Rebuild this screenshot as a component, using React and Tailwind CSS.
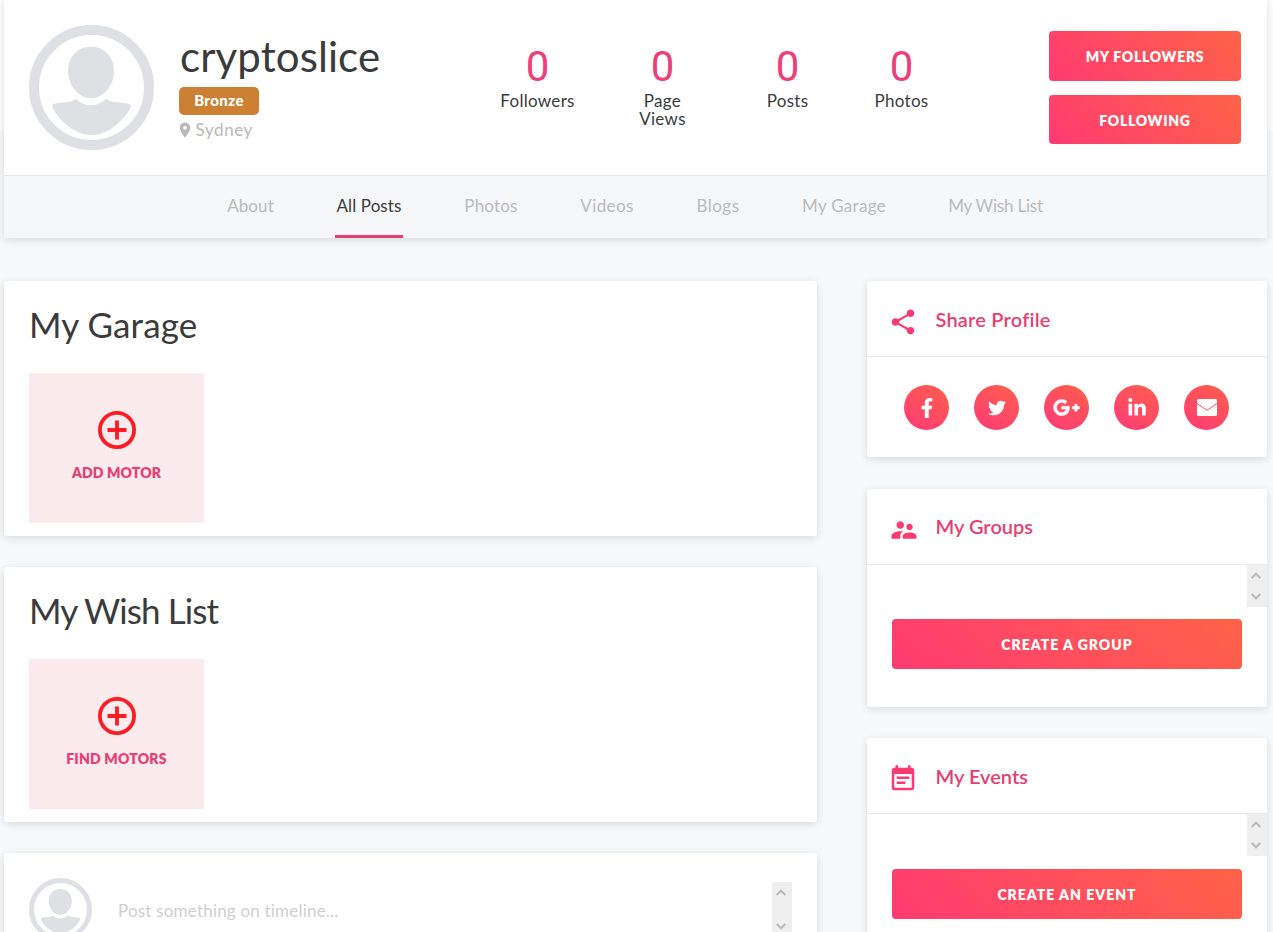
import { FaFacebookF, FaGooglePlusG, FaLinkedinIn, FaTwitter } from "react-icons/fa";
import { MdEventNote, MdLocationOn, MdShare, MdSupervisorAccount } from "react-icons/md";

const STATS = [
  { label: "Followers", box: "w-[125px]" },
  { label: "Page Views", box: "w-[125px] px-8" },
  { label: "Posts", box: "w-[125px]" },
  { label: "Photos", box: "w-[103px]" },
];

const TABS = [
  { label: "About", box: "w-[49px] tracking-[0.1px]" },
  { label: "All Posts", box: "w-[68px] tracking-[0.1px]", active: true },
  { label: "Photos", box: "w-[56px] tracking-[0.2px]" },
  { label: "Videos", box: "w-[56px] tracking-[0.4px]" },
  { label: "Blogs", box: "w-[46px] tracking-[0.5px]" },
  { label: "My Garage", box: "w-[86px] tracking-[0.3px]" },
  { label: "My Wish List", box: "w-[97px] tracking-[-0.2px]" },
];

const CARD = "rounded-[3px] bg-white shadow-[0_2px_8px_rgba(0,0,0,0.12)]";
const GRADIENT = "bg-[linear-gradient(45deg,#ff3a72,#ff6347)]";

function Avatar({ className }) {
  return (
    <svg viewBox="0 0 125 125" className={className} fill="#dfe0e4">
      <circle cx="62.5" cy="62.5" r="57.5" fill="#fff" stroke="#dfe0e4" strokeWidth="10" />
      <path d="M62 21.7c13.500 0 23 10.500 23 24.500 0 13.500-10 27.100-23 27.100S39 59.700 39 46.200c0-14 9.500-24.500 23-24.500z" />
      <path d="M23 80.500C25 76 39 79.500 47 73.700c8.500 8.800 21.500 8.800 30 0 8 5.800 22.500 2.300 25 6.800C102 86 84 110 62.500 110S24 87 23 80.500z" />
    </svg>
  );
}

function EnvelopeIcon() {
  return (
    <svg viewBox="0 0 20 17" className="h-[17px] w-5" fill="#fff">
      <rect width="20" height="17" rx="1.5" />
      <path d="M0 4.500 10 11.300 20 4.500" fill="none" stroke="#ff4f5d" strokeWidth="1" />
    </svg>
  );
}

function PlusIcon() {
  return (
    <svg viewBox="0 0 38 38" className="size-[38px]" fill="none" stroke="#fb1c24" strokeWidth="3.8">
      <circle cx="19" cy="19" r="17.1" />
      <path d="M19 9.500v19M9.500 19h19" />
    </svg>
  );
}

function Scroller({ className }) {
  return (
    <div className={`flex w-5 flex-col items-start justify-between bg-[#efefef] py-[7px] pl-1 ${className}`}>
      <svg viewBox="0 0 10 7" className="h-[7px] w-2.5" fill="none" stroke="#bababa" strokeWidth="2">
        <path d="M.7 6 5 1.700 9.300 6" />
      </svg>
      <svg viewBox="0 0 10 7" className="h-[7px] w-2.5" fill="none" stroke="#bababa" strokeWidth="2">
        <path d="M.7 1 5 5.300 9.300 1" />
      </svg>
    </div>
  );
}

function GradientButton({ className, children }) {
  return (
    <button className={`flex items-center justify-center rounded pt-0.5 text-sm font-extrabold text-white ${GRADIENT} ${className}`}>
      {children}
    </button>
  );
}

function MotorCard({ title, titleClass, action, actionClass }) {
  return (
    <section className={`h-[255px] px-[25px] pt-[22px] ${CARD}`}>
      <h2 className={`text-[35px] leading-[42px] text-[#3a3b3d] ${titleClass}`}>{title}</h2>
      <button className="mt-7 flex h-[150px] w-[175px] flex-col items-center bg-[#fcebec] pt-[38px]">
        <PlusIcon />
        <span className={`mt-3.5 text-sm font-extrabold text-[#e83e75] ${actionClass}`}>{action}</span>
      </button>
    </section>
  );
}

function SideHeader({ icon: Icon, iconClass, title, titleClass }) {
  return (
    <header className="flex h-[76px] items-center border-b border-[#e9e9eb] pl-[21px]">
      <Icon className={`size-[30px] text-[#fc3a72] ${iconClass}`} />
      <h3 className={`ml-[17.5px] text-xl font-semibold text-[#e63f72] ${titleClass}`}>{title}</h3>
    </header>
  );
}

function Share({ children }) {
  return (
    <a className="flex size-[45px] items-center justify-center rounded-full bg-[linear-gradient(30deg,#ff3a78,#ff5f4a)] text-white">
      {children}
    </a>
  );
}

export default function App() {
  return (
    <div className="h-[932px] overflow-hidden bg-[linear-gradient(#fdfdfd_130px,#f7f8fa_130px)] pr-1.5 pl-1 font-['Lato',sans-serif] text-[17px] text-[#3a3b3d]">
      <div className="h-[238px] bg-white shadow-[0_2px_8px_rgba(0,0,0,0.12)]">
        <div className="flex h-[175px] pl-[25px]">
          <Avatar className="mt-[25px] size-[125px]" />
          <div className="ml-[25px] w-[296px] pt-[31px]">
            <h1 className="ml-px text-[42px] leading-[50px] tracking-[0.1px]">cryptoslice</h1>
            <span className="mt-1.5 flex h-7 w-20 items-center justify-center rounded-[5px] bg-[#cc8033] pb-0.5 text-[15px] font-black tracking-[0.4px] text-white">
              Bronze
            </span>
            <div className="mt-[3px] -ml-[3.5px] flex items-center text-[#b9b9ba]">
              <MdLocationOn className="-mt-px size-[18px]" />
              <span className="ml-0.5 leading-6 tracking-[0.6px]">Sydney</span>
            </div>
          </div>
          <ul className="flex pt-[42px] text-center">
            {STATS.map((stat) => (
              <li key={stat.label} className={stat.box}>
                <div className="font-['Roboto',sans-serif] text-[42px] leading-[50px] text-[#ee4078]">0</div>
                <div className="leading-[18px] tracking-[0.3px]">{stat.label}</div>
              </li>
            ))}
          </ul>
          <div className="ml-auto flex flex-col gap-3.5 pt-[31px] pr-[26px]">
            <GradientButton className="h-[50px] w-48 tracking-[0.7px]">MY FOLLOWERS</GradientButton>
            <GradientButton className="h-[49px] w-48 tracking-[0.7px]">FOLLOWING</GradientButton>
          </div>
        </div>
        <nav className="flex h-[63px] justify-center gap-[60px] border-t border-[#e8e9eb] bg-[#f6f7f9] pr-px">
          {TABS.map((tab) => (
            <a
              key={tab.label}
              className={`flex justify-center border-b-3 pt-[17px] whitespace-nowrap ${tab.box} ${
                tab.active ? "border-[#e83e75] text-[#3a3b3d]" : "border-transparent text-[#bbbbbc]"
              }`}
            >
              {tab.label}
            </a>
          ))}
        </nav>
      </div>

      <div className="mt-[43px] flex justify-between">
        <main className="flex w-[813px] flex-col gap-[31px]">
          <MotorCard title="My Garage" titleClass="tracking-[0.1px]" action="ADD MOTOR" actionClass="tracking-[0.1px]" />
          <MotorCard title="My Wish List" titleClass="tracking-[-0.9px]" action="FIND MOTORS" actionClass="tracking-[0.2px]" />
          <section className={`flex h-[160px] px-[25px] pt-[25px] ${CARD}`}>
            <Avatar className="size-[63px]" />
            <p className="mt-5 ml-[26px] tracking-[0.2px] text-[#cfcfd0]">Post something on timeline...</p>
            <Scroller className="mt-1 ml-auto h-[55px]" />
          </section>
        </main>

        <aside className="flex w-[400px] flex-col">
          <section className={`h-[176px] ${CARD}`}>
            <SideHeader icon={MdShare} iconClass="mt-1.5" title="Share Profile" titleClass="mt-px tracking-[0.2px]" />
            <div className="flex gap-[25px] pt-7 pl-[37px]">
              <Share>
                <FaFacebookF className="size-5" />
              </Share>
              <Share>
                <FaTwitter className="size-[18px]" />
              </Share>
              <Share>
                <FaGooglePlusG className="size-[27px] stroke-white stroke-[12px]" />
              </Share>
              <Share>
                <FaLinkedinIn className="size-5" />
              </Share>
              <Share>
                <EnvelopeIcon />
              </Share>
            </div>
          </section>

          <section className={`mt-8 h-[218px] ${CARD}`}>
            <SideHeader icon={MdSupervisorAccount} iconClass="mt-1.5 translate-x-px" title="My Groups" titleClass="-mt-0.5" />
            <Scroller className="ml-auto h-[42px]" />
            <GradientButton className="mx-[25px] mt-3 h-[50px] w-[350px] tracking-[1px]">CREATE A GROUP</GradientButton>
          </section>

          <section className={`mt-[31px] h-[219px] ${CARD}`}>
            <SideHeader icon={MdEventNote} iconClass="mt-1.5" title="My Events" titleClass="mt-px" />
            <Scroller className="ml-auto h-[42px]" />
            <GradientButton className="mx-[25px] mt-[13px] h-[50px] w-[350px] tracking-[1px]">CREATE AN EVENT</GradientButton>
          </section>
        </aside>
      </div>
    </div>
  );
}
